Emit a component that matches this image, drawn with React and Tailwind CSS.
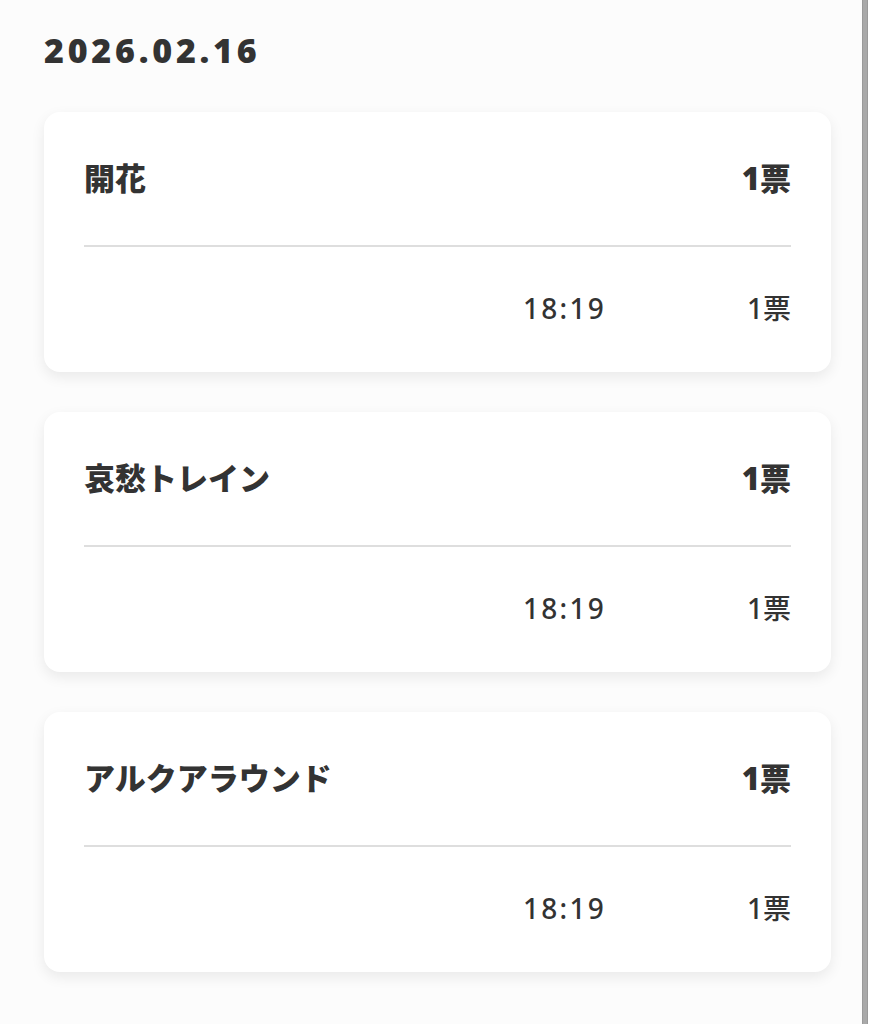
import React from "react";

const items = ["開花", "哀愁トレイン", "アルクアラウンド"];

const font = { fontFamily: '"Noto Sans", "Noto Sans CJK JP", sans-serif' };

function Card({ title }) {
  return (
    <div className="bg-white rounded-[16px] shadow-[0_5px_14px_rgba(0,0,0,0.08)] px-10 pt-[46px] pb-[44px]">
      <div className="flex items-center justify-between h-[40px] text-[31px] font-black text-[#333]">
        <span>{title}</span>
        <span>1票</span>
      </div>
      <div className="mt-[47px] h-[2px] bg-[#dedede]" />
      <div className="mt-[41px] flex items-center justify-end h-[40px] text-[28px] font-medium text-[#333]">
        <span className="tracking-[0.08em]">18:19</span>
        <span className="w-[185px] text-right">1票</span>
      </div>
    </div>
  );
}

export default function App() {
  return (
    <div className="flex min-h-[1024px] w-[876px] bg-[#fcfcfc]" style={font}>
      <div className="w-[862px] pl-[44px] pr-[31px] pt-[28px]">
        <div className="h-[44px] flex items-center text-[34px] font-black text-[#333] tracking-[0.11em]">
          2026.02.16
        </div>
        <div className="mt-10 flex flex-col gap-10">
          {items.map((t) => (
            <Card key={t} title={t} />
          ))}
        </div>
      </div>
      <div className="w-[6px] bg-[#a9a9a9] border-x border-[#9a9a9a]" />
      <div className="flex-1 bg-white" />
    </div>
  );
}
